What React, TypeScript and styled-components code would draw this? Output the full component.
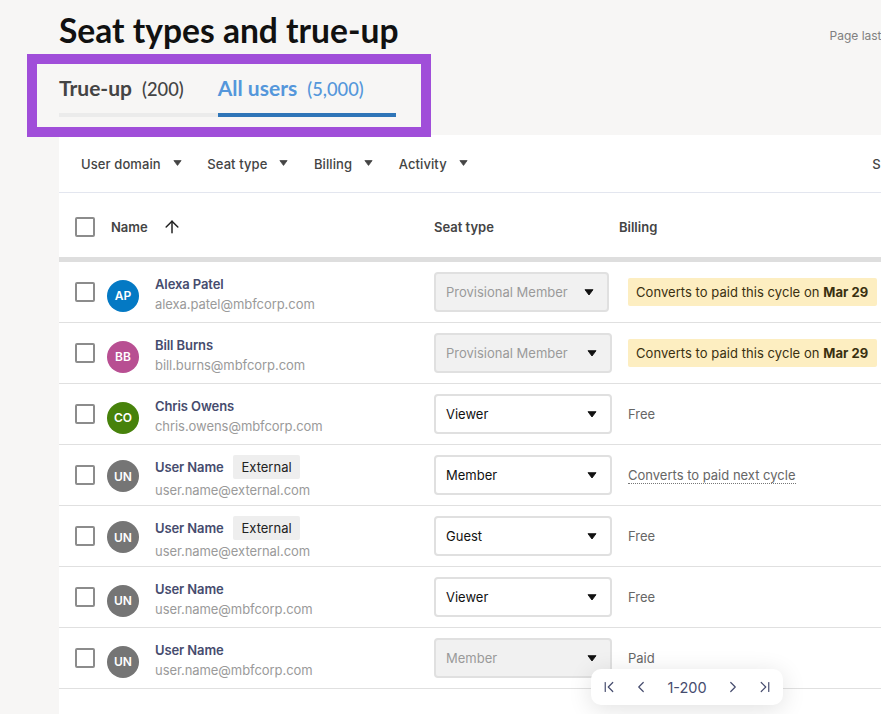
import React from "react";
import styled, { createGlobalStyle } from "styled-components";
import { ArrowUp, ChevronFirst, ChevronLast, ChevronLeft, ChevronRight } from "lucide-react";

const GlobalStyle = createGlobalStyle`
  html, body {
    margin: 0;
    height: 100%;
    overflow: hidden;
    background: #f7f6f5;
    font-family: Inter, "Liberation Sans", sans-serif;
  }
`;

const rows = [
  { name: "Alexa Patel", email: "alexa.patel@mbfcorp.com", initials: "AP", color: "#0479c4", seat: "Provisional Member", disabled: true, narrow: true, billing: "badge" },
  { name: "Bill Burns", email: "bill.burns@mbfcorp.com", initials: "BB", color: "#b84f92", seat: "Provisional Member", disabled: true, billing: "badge" },
  { name: "Chris Owens", email: "chris.owens@mbfcorp.com", initials: "CO", color: "#47820b", seat: "Viewer", billing: "Free" },
  { name: "User Name", email: "user.name@external.com", initials: "UN", color: "#757575", seat: "Member", external: true, billing: "next" },
  { name: "User Name", email: "user.name@external.com", initials: "UN", color: "#757575", seat: "Guest", external: true, billing: "Free" },
  { name: "User Name", email: "user.name@mbfcorp.com", initials: "UN", color: "#757575", seat: "Viewer", billing: "Free" },
  { name: "User Name", email: "user.name@mbfcorp.com", initials: "UN", color: "#757575", seat: "Member", disabled: true, billing: "Paid" },
];

const Caret = ({ size = 9 }: { size?: number }) => (
  <svg width={size} height={size * 0.67} viewBox="0 0 9 6">
    <path d="M.9.6h7.2L4.5 5.4z" fill="currentColor" stroke="currentColor" strokeWidth=".8" strokeLinejoin="round" />
  </svg>
);

export default function App() {
  return (
    <Page>
      <GlobalStyle />
      <TitleRow>
        <Title>Seat types and true-up</Title>
        <Updated>Page last updated Mar 1</Updated>
      </TitleRow>
      <Tabs>
        <Tab>
          True-up <Count>(200)</Count>
        </Tab>
        <Tab $active>
          All users <Count>(5,000)</Count>
        </Tab>
      </Tabs>
      <Highlight />
      <Card>
        <Toolbar>
          {["User domain", "Seat type", "Billing", "Activity"].map((f) => (
            <Filter key={f}>
              {f}
              <Caret />
            </Filter>
          ))}
          <ToolbarEnd>Show</ToolbarEnd>
        </Toolbar>
        <HeaderRow>
          <NameHead>
            <Checkbox />
            <NameLabel>Name</NameLabel>
            <ArrowUp size={20} strokeWidth={1.8} color="#222" />
          </NameHead>
          <HeadLabel>Seat type</HeadLabel>
          <HeadLabel>Billing</HeadLabel>
        </HeaderRow>
        {rows.map((r, i) => (
          <Row key={i}>
            <UserCell>
              <Checkbox />
              <Avatar $color={r.color} $external={r.external}>
                {r.initials}
              </Avatar>
              <UserText>
                <NameLine>
                  <Name>{r.name}</Name>
                  {r.external && <Tag>External</Tag>}
                </NameLine>
                <Email>{r.email}</Email>
              </UserText>
            </UserCell>
            <Select $disabled={r.disabled} $narrow={r.narrow}>
              {r.seat}
              <SelectCaret>
                <Caret size={10} />
              </SelectCaret>
            </Select>
            <BillingCell>
              {r.billing === "badge" ? (
                <Badge>
                  Converts to paid this cycle on <strong>Mar 29</strong>
                </Badge>
              ) : r.billing === "next" ? (
                <Dotted>Converts to paid next cycle</Dotted>
              ) : (
                r.billing
              )}
            </BillingCell>
          </Row>
        ))}
      </Card>
      <Pager>
        <ChevronFirst size={18} strokeWidth={1.6} />
        <ChevronLeft size={18} strokeWidth={1.6} />
        <PagerText>1-200</PagerText>
        <ChevronRight size={18} strokeWidth={1.6} />
        <ChevronLast size={18} strokeWidth={1.6} />
      </Pager>
    </Page>
  );
}

const Page = styled.div`
  position: relative;
  width: 881px;
  height: 714px;
  overflow: hidden;
  padding-left: 59px;
  box-sizing: border-box;
`;

const TitleRow = styled.div`
  display: flex;
  align-items: center;
  box-sizing: border-box;
  height: 64px;
  padding-bottom: 4px;
  white-space: nowrap;
`;

const Title = styled.h1`
  margin: 0;
  font-family: Lato, sans-serif;
  font-size: 33.6px;
  font-weight: 700;
  color: #111;
`;

const Updated = styled.span`
  margin-left: 431px;
  margin-top: 10px;
  font-size: 12px;
  color: #808080;
`;

const Tabs = styled.div`
  display: flex;
  height: 53px;
`;

const Tab = styled.div<{ $active?: boolean }>`
  box-sizing: border-box;
  height: 53px;
  padding: 9px ${(p) => (p.$active ? "32px" : "34px")} 0 0;
  white-space: nowrap;
  font-family: Lato, sans-serif;
  font-size: 21px;
  font-weight: 700;
  line-height: 30px;
  color: ${(p) => (p.$active ? "#5597db" : "#444")};
  border-bottom: 4px solid ${(p) => (p.$active ? "#2f75b8" : "#ebebeb")};
`;

const Count = styled.span`
  margin-left: 5px;
  font-size: 18.3px;
  font-weight: 500;
`;

const Highlight = styled.div`
  position: absolute;
  left: 27px;
  top: 54px;
  width: 404px;
  height: 83px;
  box-sizing: border-box;
  border: 10px solid #a04ed9;
`;

const Card = styled.div`
  width: 1200px;
  height: 600px;
  margin-top: 18px;
  background: #fff;
`;

const Toolbar = styled.div`
  display: flex;
  align-items: center;
  height: 57px;
  padding-left: 22px;
  border-bottom: 1px solid #e3e6ef;
`;

const Filter = styled.div`
  display: flex;
  align-items: center;
  gap: 12px;
  margin-right: 25.5px;
  font-size: 13px;
  font-weight: 500;
  letter-spacing: 0.1px;
  color: #444;
  white-space: nowrap;
`;

const ToolbarEnd = styled.div`
  margin-left: 379px;
  font-size: 13px;
  font-weight: 500;
  color: #444;
`;

const columns = "375px 185px 1fr";

const HeaderRow = styled.div`
  display: grid;
  grid-template-columns: ${columns};
  align-items: center;
  height: 60px;
  padding-top: 4px;
  border-bottom: 5px solid #dedede;
`;

const NameHead = styled.div`
  display: flex;
  align-items: center;
  padding-left: 16px;
`;

const HeadLabel = styled.div`
  font-size: 13px;
  font-weight: 600;
  color: #444;
`;

const NameLabel = styled(HeadLabel)`
  margin: 0 14px 0 16px;
`;

const Row = styled.div`
  display: grid;
  grid-template-columns: ${columns};
  align-items: center;
  height: 60px;
  border-bottom: 1px solid #e0e0e0;
`;

const UserCell = styled.div`
  display: flex;
  align-items: center;
  padding-left: 16px;
`;

const Checkbox = styled.div`
  flex: none;
  width: 20px;
  height: 20px;
  box-sizing: border-box;
  border: 2px solid #8c8c8c;
  border-radius: 2px;
`;

const Avatar = styled.div<{ $color: string; $external?: boolean }>`
  flex: none;
  display: flex;
  align-items: center;
  justify-content: center;
  width: 32px;
  height: 32px;
  margin: ${(p) => (p.$external ? "2px" : "7px")} 16px 0 12px;
  border-radius: 50%;
  background: ${(p) => p.$color};
  color: #fff;
  font-size: 12px;
  font-weight: 600;
`;

const UserText = styled.div`
  display: flex;
  flex-direction: column;
  gap: 3px;
  margin-top: 4px;
`;

const NameLine = styled.div`
  display: flex;
  align-items: center;
`;

const Name = styled.span`
  width: 78px;
  font-size: 13px;
  font-weight: 600;
  line-height: 17px;
  letter-spacing: -0.1px;
  white-space: nowrap;
  color: #464c6e;
`;

const Tag = styled.span`
  padding: 0 8.5px;
  font-size: 13px;
  line-height: 24px;
  color: #222;
  background: #eee;
  border-radius: 2px;
`;

const Email = styled.span`
  font-size: 13px;
  line-height: 17px;
  letter-spacing: -0.06px;
  color: #9a9a9a;
`;

const Select = styled.div<{ $disabled?: boolean; $narrow?: boolean }>`
  display: flex;
  align-items: center;
  width: ${(p) => (p.$narrow ? "175px" : "178px")};
  height: 40px;
  box-sizing: border-box;
  padding-left: 10px;
  border: 2px solid #e0e0e0;
  border-radius: 4px;
  font-size: 13px;
  color: ${(p) => (p.$disabled ? "#9a9a9a" : "#111")};
  background: ${(p) => (p.$disabled ? "#f1f1f1" : "#fff")};
`;

const SelectCaret = styled.span`
  display: flex;
  margin-left: auto;
  margin-right: 13px;
  color: #111;
`;

const BillingCell = styled.div`
  padding-left: 9px;
  font-size: 13px;
  color: #666;
`;

const Badge = styled.span`
  display: inline-block;
  width: 249px;
  box-sizing: border-box;
  padding: 0 8px;
  line-height: 28px;
  font-size: 13px;
  letter-spacing: 0.05px;
  white-space: nowrap;
  color: #3a3010;
  background: #fdeec1;
  border-radius: 2px;
  strong {
    font-weight: 700;
  }
`;

const Dotted = styled.span`
  border-bottom: 1px dotted #777;
`;

const Pager = styled.div`
  position: absolute;
  left: 591px;
  top: 669px;
  display: flex;
  align-items: center;
  justify-content: center;
  gap: 14px;
  width: 192px;
  height: 36px;
  box-sizing: border-box;
  background: #fff;
  border-radius: 10px;
  color: #464c6e;
  box-shadow: 0 4px 24px rgba(0, 0, 0, 0.12);
`;

const PagerText = styled.span`
  margin: 0 3px;
  font-size: 14.5px;
  color: #464c6e;
`;
